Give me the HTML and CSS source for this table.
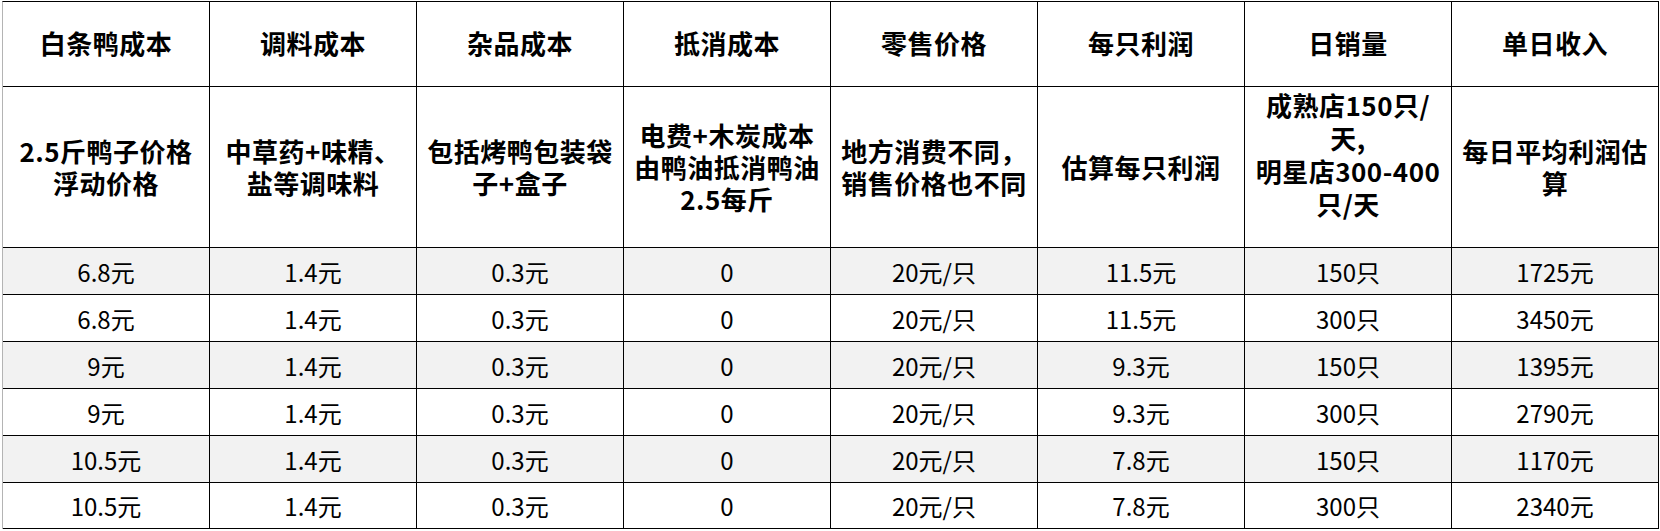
FILE: index.html
```html
<!DOCTYPE html>
<html lang="zh-CN">
<head>
<meta charset="utf-8">
<title>烤鸭成本与收入估算</title>
<link rel="stylesheet" href="styles.css">
</head>
<body>
<div class="sheet">
  <div class="cell head">白条鸭成本</div>
  <div class="cell head">调料成本</div>
  <div class="cell head">杂品成本</div>
  <div class="cell head">抵消成本</div>
  <div class="cell head">零售价格</div>
  <div class="cell head">每只利润</div>
  <div class="cell head">日销量</div>
  <div class="cell head">单日收入</div>

  <div class="cell desc"><span class="ln">2.5斤鸭子价格</span><span class="ln">浮动价格</span></div>
  <div class="cell desc"><span class="ln">中草药+味精、</span><span class="ln">盐等调味料</span></div>
  <div class="cell desc"><span class="ln">包括烤鸭包装袋</span><span class="ln">子+盒子</span></div>
  <div class="cell desc"><span class="ln">电费+木炭成本</span><span class="ln">由鸭油抵消鸭油</span><span class="ln">2.5每斤</span></div>
  <div class="cell desc"><span class="ln">地方消费不同，</span><span class="ln">销售价格也不同</span></div>
  <div class="cell desc"><span class="ln">估算每只利润</span></div>
  <div class="cell desc desc-top"><span class="ln">成熟店150只/</span><span class="ln">天,</span><span class="ln">明星店300-400</span><span class="ln">只/天</span></div>
  <div class="cell desc"><span class="ln">每日平均利润估</span><span class="ln">算</span></div>

  <div class="cell data shade">6.8元</div>
  <div class="cell data shade">1.4元</div>
  <div class="cell data shade">0.3元</div>
  <div class="cell data shade">0</div>
  <div class="cell data shade">20元/只</div>
  <div class="cell data shade">11.5元</div>
  <div class="cell data shade">150只</div>
  <div class="cell data shade">1725元</div>

  <div class="cell data">6.8元</div>
  <div class="cell data">1.4元</div>
  <div class="cell data">0.3元</div>
  <div class="cell data">0</div>
  <div class="cell data">20元/只</div>
  <div class="cell data">11.5元</div>
  <div class="cell data">300只</div>
  <div class="cell data">3450元</div>

  <div class="cell data shade">9元</div>
  <div class="cell data shade">1.4元</div>
  <div class="cell data shade">0.3元</div>
  <div class="cell data shade">0</div>
  <div class="cell data shade">20元/只</div>
  <div class="cell data shade">9.3元</div>
  <div class="cell data shade">150只</div>
  <div class="cell data shade">1395元</div>

  <div class="cell data">9元</div>
  <div class="cell data">1.4元</div>
  <div class="cell data">0.3元</div>
  <div class="cell data">0</div>
  <div class="cell data">20元/只</div>
  <div class="cell data">9.3元</div>
  <div class="cell data">300只</div>
  <div class="cell data">2790元</div>

  <div class="cell data shade">10.5元</div>
  <div class="cell data shade">1.4元</div>
  <div class="cell data shade">0.3元</div>
  <div class="cell data shade">0</div>
  <div class="cell data shade">20元/只</div>
  <div class="cell data shade">7.8元</div>
  <div class="cell data shade">150只</div>
  <div class="cell data shade">1170元</div>

  <div class="cell data">10.5元</div>
  <div class="cell data">1.4元</div>
  <div class="cell data">0.3元</div>
  <div class="cell data">0</div>
  <div class="cell data">20元/只</div>
  <div class="cell data">7.8元</div>
  <div class="cell data">300只</div>
  <div class="cell data">2340元</div>
</div>
</body>
</html>
```

FILE: styles.css
```css
html, body {
  margin: 0;
  padding: 0;
  background: #ffffff;
}

body {
  font-family: "Noto Sans CJK SC", "Noto Sans", sans-serif;
  color: #000000;
}

.sheet {
  display: grid;
  grid-template-columns: repeat(8, 207px);
  grid-template-rows: 85px 161px 47px 47px 47px 47px 47px 46px;
  margin: 1px 0 0 2px;
  width: max-content;
  border-top: 1px solid #000000;
  border-left: 1px solid #b4b4b4;
}

.cell {
  box-sizing: border-box;
  border-right: 1px solid #000000;
  border-bottom: 1px solid #000000;
  display: flex;
  align-items: center;
  justify-content: center;
  text-align: center;
  white-space: nowrap;
  overflow: hidden;
}

.head {
  font-size: 26px;
  font-weight: 700;
  letter-spacing: 0.5px;
  padding-bottom: 4px;
}

.desc {
  flex-direction: column;
  font-size: 26px;
  font-weight: 700;
  letter-spacing: 0.5px;
}

.ln {
  display: block;
  height: 32px;
  line-height: 32px;
}

.desc-top {
  justify-content: flex-start;
  padding-top: 1px;
}

.desc-top .ln {
  height: 33px;
  line-height: 33px;
}

.data {
  font-size: 24px;
  font-weight: 400;
}

.shade {
  background: #f2f2f2;
}
```
